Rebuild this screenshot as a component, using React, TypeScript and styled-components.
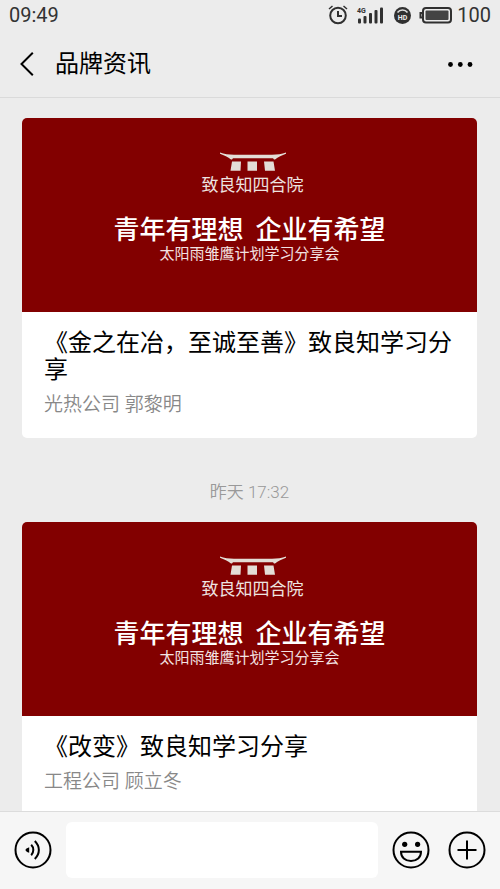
import React from "react";
import styled, { createGlobalStyle } from "styled-components";

const GlobalStyle = createGlobalStyle`
  * { box-sizing: border-box; }
  body {
    margin: 0;
    background: #ececec;
    color: #000;
    font-family: Roboto, "Noto Sans CJK SC", sans-serif;
  }
  h1, h2, p { margin: 0; font-weight: 400; }
`;

const Screen = styled.div`
  display: flex;
  flex-direction: column;
  height: 100vh;
  overflow: hidden;
`;

const StatusBar = styled.div`
  display: flex;
  flex: none;
  align-items: center;
  justify-content: space-between;
  height: 31px;
  padding: 0 9px;
  font-size: 20px;
  line-height: 31px;
  color: #333;
`;

const StatusIcons = styled.div`
  display: flex;
  align-items: center;

  svg { display: block; }
`;

const BatteryLevel = styled.span`
  margin-left: 5px;
`;

const NavBar = styled.header`
  display: flex;
  flex: none;
  align-items: center;
  height: 67px;
  padding: 0 24px 0 18px;
  border-bottom: 1px solid #dadada;
`;

const IconButton = styled.button`
  display: block;
  flex: none;
  padding: 0;
  border: 0;
  background: none;
  color: #000;

  svg { display: block; }
`;

const NavTitle = styled.h1`
  flex: 1;
  padding-left: 17px;
  font-size: 24px;
  line-height: 32px;
`;

const Messages = styled.main`
  flex: 1;
  min-height: 0;
  overflow: hidden;
  padding: 20px 23px 0 22px;
`;

const Card = styled.article`
  overflow: hidden;
  min-height: 320px;
  border-radius: 5px;
  background: #fff;
`;

const CardLink = styled.a`
  display: block;
  color: inherit;
  text-decoration: none;
`;

const Banner = styled.div`
  display: flex;
  flex-direction: column;
  align-items: center;
  aspect-ratio: 455 / 194;
  padding-top: 34px;
  background: #820000;
  color: #fff;
  font-family: KaiTi, STKaiti, "Noto Sans CJK SC", serif;
  white-space: nowrap;
`;

const Brand = styled.div`
  display: flex;
  flex-direction: column;
  align-items: center;
  padding-left: 6px;

  svg { display: block; }
`;

const LogoName = styled.p`
  font-size: 17px;
  line-height: 24px;
  color: #eee4e0;
`;

const Slogan = styled.p`
  display: flex;
  gap: 12px;
  margin-top: 16px;
  font-size: 26px;
  font-weight: 500;
  line-height: 31px;
`;

const Event = styled.p`
  font-size: 15px;
  line-height: 20px;
  color: #f3e2e2;
`;

const CardBody = styled.div`
  padding: 18px 22px 20px;
`;

const CardTitle = styled.h2`
  font-size: 24px;
  line-height: 27px;
`;

const CardSource = styled.p`
  margin-top: 8px;
  font-size: 19px;
  font-weight: 350;
  line-height: 26px;
  color: #888;
`;

const Timestamp = styled.p`
  padding: 42px 0 18px;
  text-align: center;
  font-size: 17px;
  font-weight: 350;
  line-height: 24px;
  color: #999;
`;

const InputBar = styled.footer`
  display: flex;
  flex: none;
  align-items: center;
  height: 78px;
  padding: 0 14px 2px;
  border-top: 1px solid #dcdcdc;
  background: #f6f6f6;
`;

const MessageInput = styled.input`
  flex: 1;
  min-width: 0;
  height: 56px;
  margin: 0 14px;
  padding: 0 12px;
  border: 0;
  border-radius: 6px;
  background: #fff;
  font: inherit;
  font-size: 20px;
`;

const Actions = styled.div`
  display: flex;
  gap: 18px;
`;

const DeviceIcons = () => (
  <svg width="124" height="24" viewBox="0 0 124 24" fill="none" aria-hidden="true">
    <g stroke="#303030" strokeWidth="2">
      <circle cx="10" cy="11.5" r="7.8" />
      <path d="M10 7V12H14" />
      <path d="M1 5L4.5 2M15.5 2L19 5" strokeWidth="1.5" />
    </g>
    <text x="29" y="9" fill="#303030" fontFamily="Roboto, sans-serif" fontSize="7" fontWeight="700">4G</text>
    <g fill="#303030">
      <rect x="30" y="14.5" width="3" height="5" rx="1" />
      <rect x="35.5" y="12" width="3" height="7.5" rx="1" />
      <rect x="41" y="9" width="3" height="10.5" rx="1" />
      <rect x="46.5" y="6" width="3" height="13.5" rx="1" />
      <rect x="52" y="3.5" width="3" height="16" rx="1" />
      <circle cx="74.5" cy="11.5" r="8.5" />
    </g>
    <path d="M69.5 8.5C72 5.2 77 5.2 79.5 8.5" stroke="#ddd" strokeWidth="1.6" />
    <text x="74.5" y="16" textAnchor="middle" fill="#eee" fontFamily="Roboto, sans-serif" fontSize="7" fontWeight="700">HD</text>
    <rect x="95" y="4" width="28" height="14.5" rx="3" stroke="#303030" strokeWidth="2" />
    <rect x="97.5" y="6.5" width="23" height="9.5" rx="1" fill="#444" />
    <path d="M94 9H92.5V13.5H94" stroke="#303030" strokeWidth="2" />
  </svg>
);

const BackIcon = () => (
  <svg width="20" height="28" viewBox="0 0 20 28" fill="none" stroke="currentColor" strokeWidth="2">
    <path d="M14.8 2.7L3.5 14L14.8 25.3" />
  </svg>
);

const MoreIcon = () => (
  <svg width="32" height="24" viewBox="0 0 32 24" fill="currentColor">
    <circle cx="6.5" cy="12.5" r="2.4" />
    <circle cx="16.3" cy="12.5" r="2.4" />
    <circle cx="26" cy="12.5" r="2.4" />
  </svg>
);

const GateLogo = () => (
  <svg width="66" height="20" viewBox="0 0 66 20" fill="#e3ddd6" aria-hidden="true">
    <path d="M0 .5C4 2.2 9 2.7 14 2.7H52C57 2.7 62 2.2 66 .5V1.7C62 3.3 58 5 55 7.5H54L53 6.2H13L12 7.5H11C8 5 4 3.3 0 1.7Z" />
    <path d="M12 9.5H21L20.5 18.8H10.5ZM27.5 9.5H37V18.8H27.5ZM44 9.5H53.5L55 18.8H45Z" />
  </svg>
);

const VoiceIcon = () => (
  <svg width="38" height="38" viewBox="0 0 38 38" fill="none" stroke="currentColor" strokeWidth="2">
    <circle cx="19" cy="19" r="17.5" />
    <path d="M15.2 16.2C12.9 17 11.5 18 11.5 19S12.9 21 15.2 21.8Z" fill="currentColor" stroke="none" />
    <path d="M17.2 13.8C20 16.6 20 21.4 17.2 24.2" />
    <path d="M20.8 10C26.2 15.4 26.2 22.6 20.8 28" />
  </svg>
);

const SmileIcon = () => (
  <svg width="38" height="38" viewBox="0 0 38 38" fill="none" stroke="currentColor" strokeWidth="2">
    <circle cx="19" cy="19" r="17.5" />
    <g fill="currentColor" stroke="none">
      <circle cx="12.7" cy="13.3" r="2.6" />
      <circle cx="25.6" cy="13.3" r="2.6" />
    </g>
    <path d="M9 20.8H29C29 26.5 24.8 30 19 30S9 26.5 9 20.8Z" />
  </svg>
);

const PlusIcon = () => (
  <svg width="38" height="38" viewBox="0 0 38 38" fill="none" stroke="currentColor" strokeWidth="2">
    <circle cx="19" cy="19" r="17.5" />
    <path d="M9.5 19H28.5M19 9.5V28.5" />
  </svg>
);

interface ArticleProps {
  title: string;
  source: string;
}

const ArticleCard = ({ title, source }: ArticleProps) => (
  <Card>
    <CardLink href="#">
      <Banner>
        <Brand>
          <GateLogo />
          <LogoName>致良知四合院</LogoName>
        </Brand>
        <Slogan>
          <span>青年有理想</span>
          <span>企业有希望</span>
        </Slogan>
        <Event>太阳雨雏鹰计划学习分享会</Event>
      </Banner>
      <CardBody>
        <CardTitle>{title}</CardTitle>
        <CardSource>{source}</CardSource>
      </CardBody>
    </CardLink>
  </Card>
);

export default function App() {
  return (
    <Screen lang="zh-CN">
      <GlobalStyle />
      <StatusBar>
        <span>09:49</span>
        <StatusIcons>
          <DeviceIcons />
          <BatteryLevel>100</BatteryLevel>
        </StatusIcons>
      </StatusBar>
      <NavBar>
        <IconButton aria-label="返回"><BackIcon /></IconButton>
        <NavTitle>品牌资讯</NavTitle>
        <IconButton aria-label="更多"><MoreIcon /></IconButton>
      </NavBar>
      <Messages>
        <ArticleCard title="《金之在冶，至诚至善》致良知学习分享" source="光热公司 郭黎明" />
        <Timestamp>昨天 17:32</Timestamp>
        <ArticleCard title="《改变》致良知学习分享" source="工程公司 顾立冬" />
      </Messages>
      <InputBar>
        <IconButton aria-label="语音"><VoiceIcon /></IconButton>
        <MessageInput type="text" aria-label="消息" />
        <Actions>
          <IconButton aria-label="表情"><SmileIcon /></IconButton>
          <IconButton aria-label="添加"><PlusIcon /></IconButton>
        </Actions>
      </InputBar>
    </Screen>
  );
}
